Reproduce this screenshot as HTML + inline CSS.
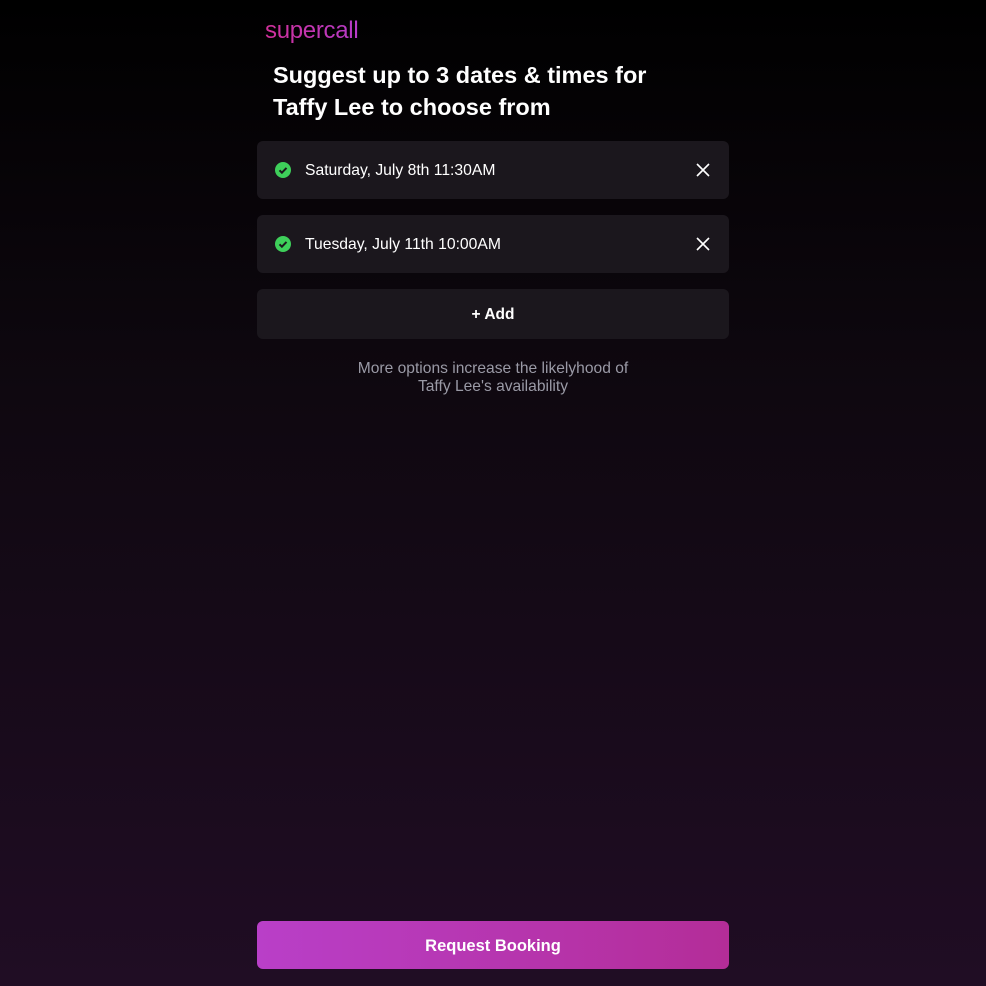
<!DOCTYPE html>
<html><head><meta charset="utf-8"><style>
*{margin:0;padding:0;box-sizing:border-box}
html,body{width:986px;height:986px;overflow:hidden}
body{background:linear-gradient(180deg,#000 0%,#0f0810 40%,#200d24 100%);font-family:"Liberation Sans",sans-serif;color:#fff;position:relative}
.logo{position:absolute;left:265px;top:17px;font-size:24px;background:linear-gradient(90deg,#d0309a,#b53bc8);-webkit-background-clip:text;color:transparent;letter-spacing:-0.3px}
h1{position:absolute;left:273px;top:59px;font-size:23.5px;line-height:32px;font-weight:bold;width:460px;white-space:nowrap}
.row{position:absolute;left:257px;width:472px;height:58px;background:#1b171d;border-radius:6px}
.row .chk{position:absolute;left:18px;top:21px;width:16px;height:16px;border-radius:50%;background:#3ecf5a}
.row .t{position:absolute;left:48px;top:21px;font-size:15.7px}
.row svg.x{position:absolute;right:19px;top:22px}
.add{position:absolute;left:257px;top:289px;width:472px;height:50px;background:#1b171d;border-radius:6px;text-align:center;line-height:52px;font-size:15.5px;font-weight:bold}
.note{position:absolute;left:237px;width:512px;top:360px;text-align:center;color:#9a9aa6;font-size:15.6px;line-height:18px}
.btn{position:absolute;left:257px;top:921px;width:472px;height:48px;border-radius:6px;background:linear-gradient(90deg,#b93fc8,#b42d98);text-align:center;line-height:51px;font-weight:bold;font-size:16.5px}
</style></head><body>
<div class="logo">supercall</div>
<h1>Suggest up to 3 dates &amp; times for<br>Taffy Lee to choose from</h1>
<div class="row" style="top:141px"><div class="chk"><svg width="16" height="16"><path d="M4.5 8.3l2.4 2.4 4.6-4.8" stroke="#1b171d" stroke-width="2" fill="none"/></svg></div><div class="t">Saturday, July 8th 11:30AM</div><svg class="x" width="14" height="14"><path d="M1 1L13 13M13 1L1 13" stroke="#fff" stroke-width="1.6"/></svg></div>
<div class="row" style="top:215px"><div class="chk"><svg width="16" height="16"><path d="M4.5 8.3l2.4 2.4 4.6-4.8" stroke="#1b171d" stroke-width="2" fill="none"/></svg></div><div class="t">Tuesday, July 11th 10:00AM</div><svg class="x" width="14" height="14"><path d="M1 1L13 13M13 1L1 13" stroke="#fff" stroke-width="1.6"/></svg></div>
<div class="add">+ Add</div>
<div class="note">More options increase the likelyhood of<br>Taffy Lee's availability</div>
<div class="btn">Request Booking</div>
</body></html>
